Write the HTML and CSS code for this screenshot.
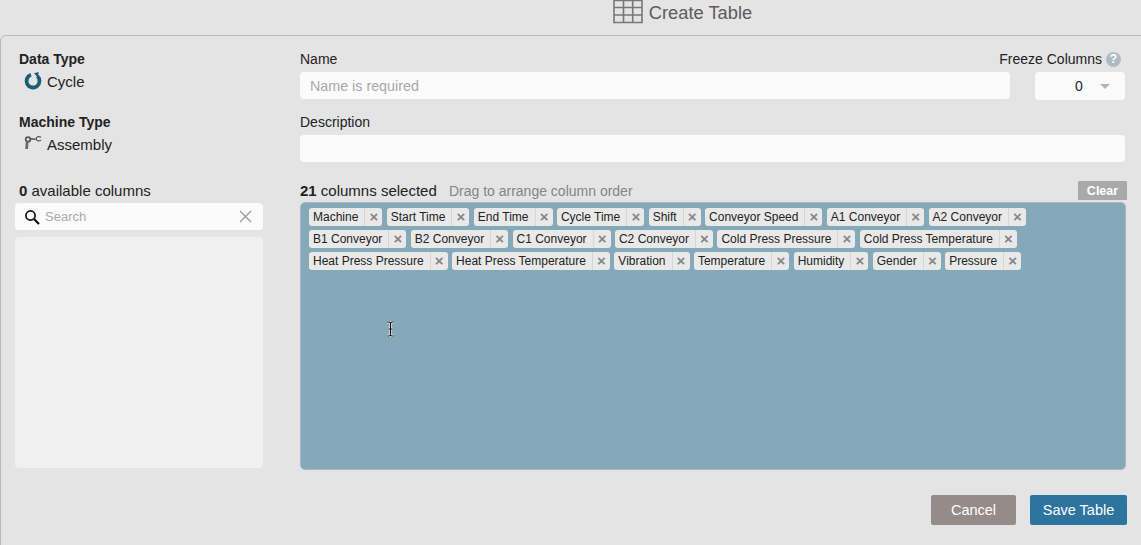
FILE: index.html
```html
<!DOCTYPE html>
<html lang="en">
<head>
    <meta charset="UTF-8">
    <meta name="viewport" content="width=device-width, initial-scale=1.0">
    <title>Create Table</title>
    <link rel="stylesheet" href="styles.css">
</head>
<body>
    <div class="page-title">
        <svg class="table-icon" width="30" height="24" viewBox="0 0 30 24">
            <path d="M1 0.5H29V22.5H1Z M1 7.5H29 M1 15H29 M10.5 0.5V22.5 M19.7 0.5V22.5" fill="none" stroke="#777" stroke-width="1.6"/>
        </svg>
        <span>Create Table</span>
    </div>

    <div class="panel">
        <div class="panel-body">
            <div class="left-col">
                <div class="field-label bold">Data Type</div>
                <div class="type-value">
                    <svg width="20" height="20" viewBox="0 0 20 20">
                        <path d="M8 3.8A6.5 6.5 0 1 0 14.4 5.2" fill="none" stroke="#1c5c78" stroke-width="3.8"/>
                        <path d="M11 2.2L15.6 1L15.2 7Z" fill="#1c5c78"/>
                    </svg>
                    <span>Cycle</span>
                </div>

                <div class="field-label bold machine-label">Machine Type</div>
                <div class="type-value">
                    <svg width="20" height="20" viewBox="0 0 20 20">
                        <circle cx="5" cy="5.4" r="2.3" fill="none" stroke="#555" stroke-width="1.7"/>
                        <path d="M7 4.8L12.6 5.2" fill="none" stroke="#555" stroke-width="1.5"/>
                        <path d="M4.2 7.5L3.6 15" fill="none" stroke="#6a6a6a" stroke-width="2.8"/>
                        <path d="M18 3.2C15.4 1.8 13.2 3 13.2 4.8C13.2 6.6 15.4 7.6 18 6.2" fill="none" stroke="#555" stroke-width="1.2"/>
                    </svg>
                    <span>Assembly</span>
                </div>

                <div class="field-label columns-label"><b>0</b> available columns</div>
                <div class="search-box">
                    <svg width="16" height="16" viewBox="0 0 16 16">
                        <circle cx="6.5" cy="6.5" r="4.6" fill="none" stroke="#111" stroke-width="1.7"/>
                        <path d="M10 10L15 15" fill="none" stroke="#111" stroke-width="2.2"/>
                    </svg>
                    <span class="search-text">Search</span>
                    <svg width="13" height="13" viewBox="0 0 13 13">
                        <path d="M1 1L12 12 M12 1L1 12" fill="none" stroke="#999" stroke-width="1.3"/>
                    </svg>
                </div>
                <div class="available-list"></div>
            </div>

            <div class="right-col">
                <div class="top-row">
                    <div class="name-field">
                        <div class="field-label">Name</div>
                        <input class="text-input" type="text" placeholder="Name is required">
                    </div>
                    <div class="freeze-field">
                        <div class="field-label freeze-label">Freeze Columns <span class="help-dot">?</span></div>
                        <div class="select-box">
                            <span>0</span>
                            <span class="select-arrow"></span>
                        </div>
                    </div>
                </div>

                <div class="field-label description-label">Description</div>
                <input class="text-input description-input" type="text">

                <div class="selected-head">
                    <div class="selected-count"><b>21</b> columns selected <span class="drag-hint">Drag to arrange column order</span></div>
                    <button class="clear-btn">Clear</button>
                </div>

                <div class="selected-box" id="selected-box"></div>
            </div>
        </div>

        <div class="panel-footer">
            <button class="btn btn-cancel">Cancel</button>
            <button class="btn btn-save">Save Table</button>
        </div>

        <svg class="text-cursor" width="9" height="16" viewBox="0 0 9 16">
            <path d="M1 1H3.5L4.5 2L5.5 1H8 M4.5 2V14 M1 15H3.5L4.5 14L5.5 15H8 M2.5 8H6.5" fill="none" stroke="#fff" stroke-width="2.4"/>
            <path d="M1 1H3.5L4.5 2L5.5 1H8 M4.5 2V14 M1 15H3.5L4.5 14L5.5 15H8 M2.5 8H6.5" fill="none" stroke="#111" stroke-width="1.2"/>
        </svg>
    </div>

    <script>
        let columns = [
            "Machine", "Start Time", "End Time", "Cycle Time", "Shift", "Conveyor Speed",
            "A1 Conveyor", "A2 Conveyor", "B1 Conveyor", "B2 Conveyor", "C1 Conveyor",
            "C2 Conveyor", "Cold Press Pressure", "Cold Press Temperature",
            "Heat Press Pressure", "Heat Press Temperature", "Vibration", "Temperature",
            "Humidity", "Gender", "Pressure"
        ];

        let box = document.getElementById("selected-box");
        for (let name of columns) {
            let tag = document.createElement("div");
            tag.className = "tag";
            tag.innerHTML = `<span class="tag-name">${name}</span><span class="tag-close">×</span>`;
            box.appendChild(tag);
        }
    </script>
</body>
</html>
```

FILE: styles.css
```css
html, body {
    height: 100%;
}
body {
    margin: 0;
    overflow: hidden;
    background-color: #e4e4e4;
    color: #222;
    font-family: "Liberation Sans", Arial, sans-serif;
    font-size: 14px;
}
.page-title {
    height: 35px;
    box-sizing: border-box;
    display: flex;
    align-items: flex-start;
    justify-content: center;
    gap: 6px;
    padding-left: 224px;
    color: #5c5c5c;
    font-size: 18.3px;
    line-height: 26px;
}
.table-icon {
    flex: none;
}
.panel {
    position: relative;
    margin-right: -12px;
    padding: 13px 27px 0 14px;
    border: 1px solid #b8b8b8;
    border-top-left-radius: 6px;
    border-top-right-radius: 6px;
    height: 520px;
}
.panel-body {
    display: flex;
    gap: 37px;
}
.left-col {
    flex: none;
    width: 248px;
}
.right-col {
    flex: 1;
    min-width: 0;
}
.field-label {
    height: 20px;
    font-size: 14px;
    line-height: 20px;
}
.bold {
    font-weight: bold;
    padding-left: 4px;
}
.type-value {
    display: flex;
    align-items: center;
    gap: 4px;
    height: 20px;
    margin-top: 2px;
    padding-left: 8px;
    font-size: 15px;
}
.machine-label {
    margin-top: 21px;
}
.columns-label {
    margin-top: 27px;
    padding-left: 4px;
    font-size: 15px;
}
.search-box {
    display: flex;
    align-items: center;
    height: 27px;
    margin-top: 2px;
    padding: 0 11px 0 9px;
    background-color: #fbfbfb;
    border-radius: 4px;
}
.search-text {
    flex: 1;
    padding-left: 5px;
    color: #a9a9a9;
    font-size: 13px;
}
.available-list {
    height: 231px;
    margin-top: 7px;
    background-color: #f0f0f0;
    border-radius: 4px;
}
.top-row {
    display: flex;
    gap: 25px;
}
.name-field {
    flex: 1;
}
.freeze-field {
    flex: none;
    width: 90px;
}
.freeze-label {
    display: flex;
    justify-content: flex-end;
    align-items: center;
    gap: 4px;
    padding-right: 4px;
    white-space: nowrap;
}
.help-dot {
    flex: none;
    width: 15px;
    height: 15px;
    border-radius: 50%;
    background-color: #adbcc4;
    color: #fff;
    font-size: 12px;
    font-weight: bold;
    line-height: 15px;
    text-align: center;
}
.text-input {
    display: block;
    box-sizing: border-box;
    width: 100%;
    height: 27px;
    margin-top: 3px;
    padding: 0 10px;
    border: 0;
    border-radius: 4px;
    background-color: #fbfbfb;
    font-family: inherit;
    font-size: 14.3px;
}
.text-input::placeholder {
    color: #a9a9a9;
}
.select-box {
    display: flex;
    align-items: center;
    box-sizing: border-box;
    height: 28px;
    margin-top: 3px;
    padding: 0 15px 0 40px;
    justify-content: space-between;
    background-color: #fbfbfb;
    border-radius: 4px;
}
.select-arrow {
    width: 0;
    height: 0;
    border-left: 5px solid transparent;
    border-right: 5px solid transparent;
    border-top: 5px solid #b5b5b5;
}
.description-label {
    margin-top: 12px;
}
.selected-head {
    display: flex;
    justify-content: space-between;
    align-items: center;
    height: 19px;
    margin-top: 19px;
    margin-right: -2px;
}
.selected-count {
    font-size: 15px;
}
.drag-hint {
    margin-left: 8px;
    color: #858585;
    font-size: 14px;
}
.clear-btn {
    width: 49px;
    height: 19px;
    padding: 0;
    border: 0;
    border-radius: 1px;
    background-color: #a9a9a9;
    color: #fff;
    font-family: inherit;
    font-size: 12.5px;
    font-weight: bold;
}
.selected-box {
    display: flex;
    flex-wrap: wrap;
    align-content: flex-start;
    gap: 4px 4.4px;
    box-sizing: border-box;
    height: 268px;
    margin-top: 2px;
    margin-right: -1px;
    padding: 5px 8px;
    border: 1px solid #a5bac5;
    border-radius: 5px;
    background-color: #86a9ba;
}
.tag {
    display: flex;
    height: 18px;
    border-radius: 3px;
    background-color: #e9e9e9;
    font-size: 12px;
    line-height: 18px;
}
.tag-name {
    padding: 0 6px 0 4px;
    border-right: 1px solid #d6d6d6;
}
.tag-close {
    width: 17px;
    color: #858585;
    font-size: 15px;
    font-weight: bold;
    text-align: center;
}
.panel-footer {
    display: flex;
    justify-content: flex-end;
    gap: 14px;
    margin-top: 25px;
    margin-right: -2px;
}
.btn {
    height: 30px;
    padding: 0;
    border: 0;
    border-radius: 2px;
    color: #fff;
    font-family: inherit;
    font-size: 14.5px;
}
.btn-cancel {
    width: 85px;
    background-color: #958b89;
}
.btn-save {
    width: 97px;
    background-color: #2d749f;
}
.text-cursor {
    position: absolute;
    left: 385px;
    top: 285px;
}
```
